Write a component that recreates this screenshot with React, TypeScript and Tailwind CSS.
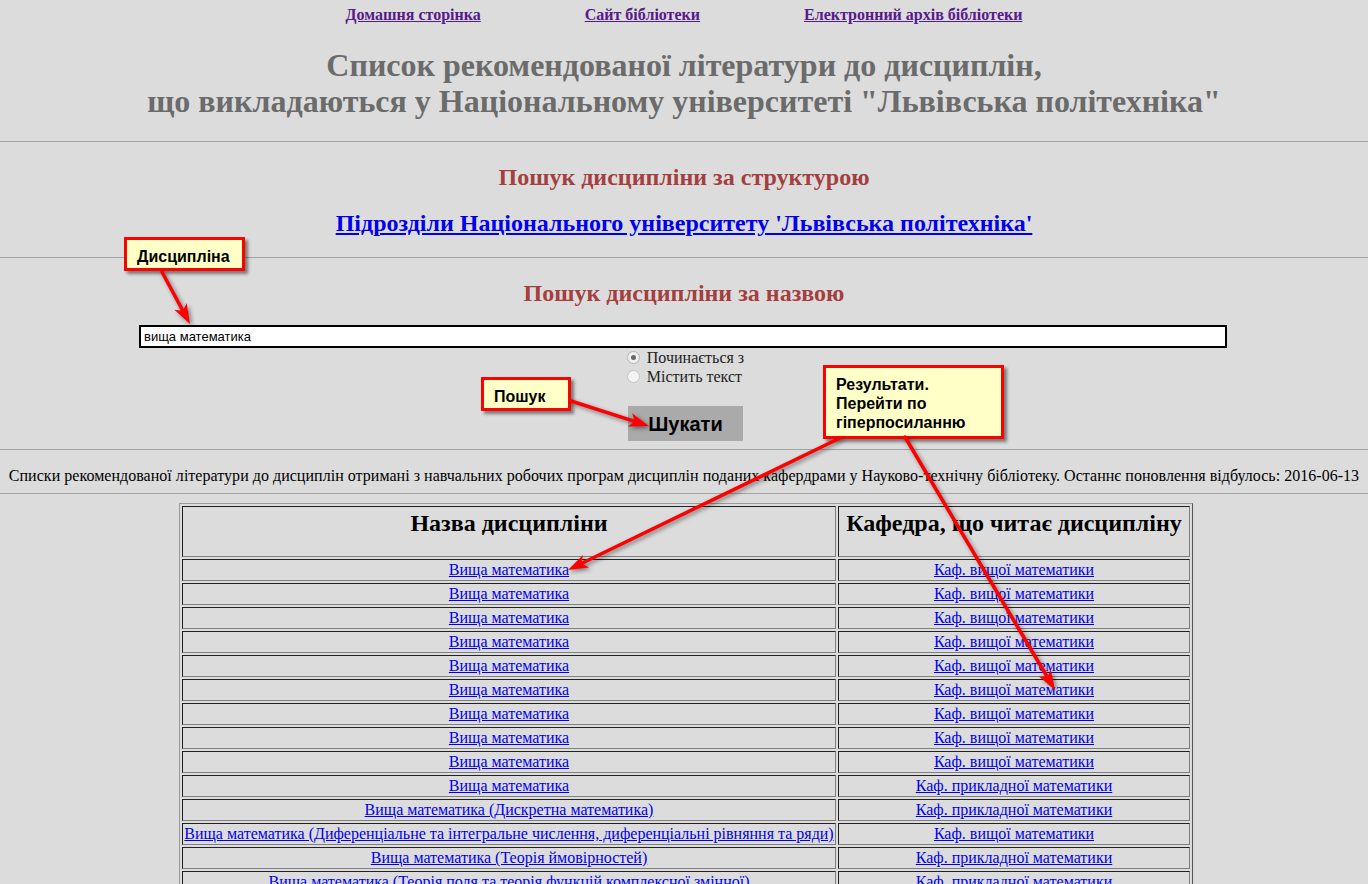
import React from 'react';

const rows: [string, string][] = [
  ['Вища математика', 'Каф. вищої математики'],
  ['Вища математика', 'Каф. вищої математики'],
  ['Вища математика', 'Каф. вищої математики'],
  ['Вища математика', 'Каф. вищої математики'],
  ['Вища математика', 'Каф. вищої математики'],
  ['Вища математика', 'Каф. вищої математики'],
  ['Вища математика', 'Каф. вищої математики'],
  ['Вища математика', 'Каф. вищої математики'],
  ['Вища математика', 'Каф. вищої математики'],
  ['Вища математика', 'Каф. прикладної математики'],
  ['Вища математика (Дискретна математика)', 'Каф. прикладної математики'],
  ['Вища математика (Диференціальне та інтегральне числення, диференціальні рівняння та ряди)', 'Каф. вищої математики'],
  ['Вища математика (Теорія ймовірностей)', 'Каф. прикладної математики'],
  ['Вища математика (Теорія поля та теорія функцій комплексної змінної)', 'Каф. прикладної математики'],
];

// arrow from (x1,y1) to tip (x2,y2)
const Arrow = ({ x1, y1, x2, y2 }: { x1: number; y1: number; x2: number; y2: number }) => {
  const dx = x2 - x1;
  const dy = y2 - y1;
  const len = Math.sqrt(dx * dx + dy * dy);
  const ux = dx / len;
  const uy = dy / len;
  const hl = 20;
  const hw = 7;
  const bx = x2 - ux * hl;
  const by = y2 - uy * hl;
  const head = `${x2},${y2} ${bx - uy * hw},${by + ux * hw} ${bx + ux * 5},${by + uy * 5} ${bx + uy * hw},${by - ux * hw}`;
  return (
    <g>
      <line x1={x1} y1={y1} x2={bx + ux * 4} y2={by + uy * 4} stroke="#ff0000" strokeWidth={3.5} strokeLinecap="round" />
      <polygon points={head} fill="#ff0000" />
    </g>
  );
};

const calloutClass =
  "absolute bg-[#ffffc8] border-[3px] border-[#ff0000] shadow-[3px_3px_3px_rgba(0,0,0,0.45)] font-['Liberation_Sans',Arial,sans-serif] font-bold text-[16px] text-black";

const hrClass = 'border-t border-[#a3a3a3]';
const cellBorder = 'border border-t-[#222] border-l-[#222] border-r-[#808080] border-b-[#808080]';

export default function App() {
  return (
    <div className="relative min-h-screen bg-[#dcdcdc] font-['Liberation_Serif','Times_New_Roman',serif] text-black overflow-hidden">
      {/* top links */}
      <div className="h-[30px] flex items-center justify-center gap-[104px] text-[16px] font-bold">
        <a href="#" className="text-[#551a8b] underline">Домашня сторінка</a>
        <a href="#" className="text-[#551a8b] underline">Сайт бібліотеки</a>
        <a href="#" className="text-[#551a8b] underline">Електронний архів бібліотеки</a>
      </div>

      <h1 className="mt-[17px] text-center text-[32px] leading-[36px] font-bold text-[#6b6b6b]">
        Список рекомендованої літератури до дисциплін,
        <br />
        що викладаються у Національному університеті "Львівська політехніка"
      </h1>

      <div className={`mt-[22px] ${hrClass}`} />

      <h2 className="mt-[20px] text-center text-[24px] leading-[30px] font-bold text-[#a33f3f]">
        Пошук дисципліни за структурою
      </h2>
      <div className="mt-[16px] text-center text-[24px] leading-[30px] font-bold">
        <a href="#" className="text-[#0000ee] underline">Підрозділи Національного університету 'Львівська політехніка'</a>
      </div>

      <div className={`mt-[19px] ${hrClass}`} />

      <h2 className="mt-[20px] text-center text-[24px] leading-[30px] font-bold text-[#a33f3f]">
        Пошук дисципліни за назвою
      </h2>

      <div className="mt-[17px] pl-[139px] pr-[141px]">
        <div className="h-[23px] border-2 border-black bg-white flex items-center pl-[3px] font-['Liberation_Sans',Arial,sans-serif] text-[13px] text-black">
          вища математика
        </div>
      </div>

      <div className="mx-auto w-fit flex flex-col items-start text-[16px] text-[#222] pl-[3px]">
        <label className="h-[19px] flex items-center gap-[7px]">
          <span className="w-[13px] h-[13px] rounded-full border border-[#b5b5b5] bg-[#f1f1f1] flex items-center justify-center">
            <span className="w-[5px] h-[5px] rounded-full bg-[#6a6a6a]" />
          </span>
          Починається з
        </label>
        <label className="h-[19px] flex items-center gap-[7px]">
          <span className="w-[13px] h-[13px] rounded-full border border-[#c4c4c4] bg-[#f3f3f3]" />
          Містить текст
        </label>
      </div>

      <div className="mt-[20px] flex justify-center">
        <button className="w-[115px] h-[35px] ml-[3px] bg-[#aaaaaa] font-['Liberation_Sans',Arial,sans-serif] font-bold text-[20px] text-black">
          Шукати
        </button>
      </div>

      <div className={`mt-[8px] ${hrClass}`} />

      <p className="mt-[17px] text-center text-[16px] leading-[18px] whitespace-nowrap tracking-[0.03px]">
        Списки рекомендованої літератури до дисциплін отримані з навчальних робочих програм дисциплін поданих кафердрами у Науково-технічну бібліотеку. Останнє поновлення відбулось: 2016-06-13
      </p>

      <div className={`mt-[8px] ${hrClass}`} />

      <table className="mt-[9px] ml-[179px] border-separate border-spacing-[2px] border border-t-[#9a9a9a] border-l-[#9a9a9a] border-r-[#555] border-b-[#555]">
        <thead>
          <tr>
            <th className={`w-[654px] h-[51px] align-top pt-[2px] text-[24px] leading-[28px] font-bold ${cellBorder}`}>
              Назва дисципліни
            </th>
            <th className={`w-[352px] h-[51px] align-top pt-[2px] text-[24px] leading-[28px] font-bold ${cellBorder}`}>
              Кафедра, що читає дисципліну
            </th>
          </tr>
        </thead>
        <tbody>
          {rows.map(([name, dept], i) => (
            <tr key={i}>
              <td className={`h-[22px] p-0 text-center text-[16px] leading-[20px] whitespace-nowrap ${cellBorder}`}>
                <a href="#" className="text-[#0000ee] underline">{name}</a>
              </td>
              <td className={`h-[22px] p-0 text-center text-[16px] leading-[20px] whitespace-nowrap ${cellBorder}`}>
                <a href="#" className="text-[#0000ee] underline">{dept}</a>
              </td>
            </tr>
          ))}
        </tbody>
      </table>

      {/* annotation callouts */}
      <div className={`${calloutClass} left-[124px] top-[237px] w-[121px] h-[34px] pl-[10px] pt-[5px]`}>
        Дисципліна
      </div>
      <div className={`${calloutClass} left-[481px] top-[377px] w-[90px] h-[34px] pl-[10px] pt-[5px]`}>
        Пошук
      </div>
      <div className={`${calloutClass} left-[823px] top-[365px] w-[181px] h-[74px] pl-[10px] pt-[7px] leading-[19px]`}>
        Результати.
        <br />
        Перейти по
        <br />
        гіперпосиланню
      </div>

      <svg
        className="absolute left-0 top-0 pointer-events-none drop-shadow-[2px_2px_2px_rgba(0,0,0,0.45)]"
        width={1368}
        height={884}
      >
        <Arrow x1={162} y1={272} x2={190} y2={324} />
        <Arrow x1={571} y1={401} x2={649} y2={426} />
        <Arrow x1={840} y1={438} x2={568} y2={570} />
        <Arrow x1={905} y1={437} x2={1055} y2={690} />
      </svg>
    </div>
  );
}
